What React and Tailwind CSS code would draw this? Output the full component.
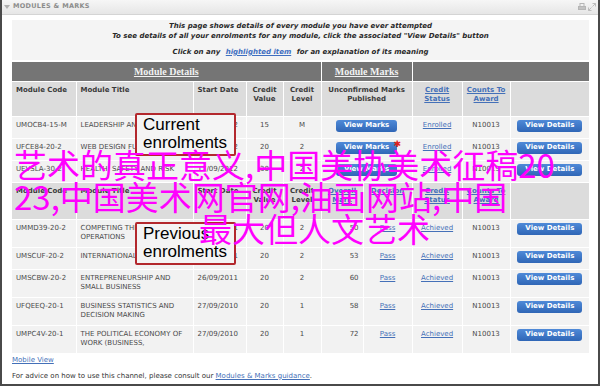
import React from "react";

// column widths of the marks table, left to right
const cols = [64, 117, 53, 37, 38, 42, 49, 50, 48, 79];

const currentRows = [
  { code: "UMOCB4-15-M", title: "LEADERSHIP AND CHANGE", date: "17/09/2012", value: "15", level: "M" },
  { code: "UFCE84-20-2", title: "WEB DESIGN FUNDAMENTALS", date: "17/09/2012", value: "20", level: "2", star: true },
  { code: "UEVSLA-30-2", title: "HEALTH, SAFETY AND RISK", date: "17/09/2012", value: "30", level: "2" },
];

const previousRows = [
  { code: "UMMD39-20-2", title: "COMPETING THROUGH OPERATIONS", date: "26/09/2011", value: "20", level: "2", mark: "50" },
  { code: "UMSCUF-20-2", title: "INTERNATIONAL BUSINESS", date: "26/09/2011", value: "20", level: "2", mark: "53" },
  { code: "UMSCBW-20-2", title: "ENTREPRENEURSHIP AND SMALL BUSINESS", date: "26/09/2011", value: "20", level: "2", mark: "60" },
  { code: "UFQEEQ-20-1", title: "BUSINESS STATISTICS AND DECISION MAKING", date: "27/09/2010", value: "20", level: "1", mark: "58" },
  { code: "UMPC4V-20-1", title: "THE POLITICAL ECONOMY OF WORK (BUSINESS,", date: "27/09/2010", value: "20", level: "1", mark: "72" },
];

const cell = "border border-white px-[4px] align-top";
const body = `${cell} bg-[#f2f2f2] pt-[4px] pb-[5px] leading-[9px] text-[#4a4a4a]`;
const btnCell = `${cell} bg-[#f2f2f2] pt-[3px] pb-[6px] text-center`;
const head = `${cell} bg-[#dcdcdc] pt-[4px] pb-[4px] leading-[9px] font-bold text-[#3a3a3a]`;
const link = "text-[#4470b8] underline";

function Button({ children, width }) {
  return (
    <span
      className={`inline-flex h-[12px] ${width} items-center justify-center rounded-[3px] bg-linear-to-b from-[#4f8ad8] to-[#2f66b6] text-[7px] font-bold leading-none text-white`}
    >
      {children}
    </span>
  );
}

function Callout({ top, children }) {
  return (
    <div
      className="absolute left-[133px] w-[101px] h-[43px] rounded-[2px] border-2 border-[#b3282d] bg-[#f4f4f4] pl-[6px] pt-[1px] font-['Liberation_Sans',Arial,sans-serif] text-[17px] leading-[18px] text-black"
      style={{ top }}
    >
      {children}
    </div>
  );
}

export default function App() {
  return (
    <div className="relative w-[600px] h-[386px] overflow-hidden border-x-2 border-b-2 border-[#4a4a4a] bg-white font-['DejaVu_Sans',Verdana,sans-serif] text-[7px]">
      {/* title bar */}
      <div className="flex h-[15px] items-center border-b border-[#d4d4d4] bg-linear-to-b from-[#f6f6f6] to-[#e6e6e6] pl-[2px] pr-[2px]">
        <svg width="6" height="5" viewBox="0 0 6 5" className="mr-[3px]">
          <path d="M0 0h6L3 4z" fill="#b0b0b0" />
        </svg>
        <span className="text-[6.5px] font-bold tracking-[0.3px] text-[#8c8c8c]">MODULES &amp; MARKS</span>
        <div className="ml-auto flex items-center gap-[2px]">
          <svg width="8" height="8" viewBox="0 0 8 8">
            <rect x="2" y="0.5" width="4" height="3" fill="none" stroke="#b5b5b5" />
            <rect x="0.5" y="3.5" width="7" height="3" fill="#c2c2c2" stroke="#b5b5b5" />
          </svg>
          <svg width="8" height="8" viewBox="0 0 8 8">
            <path d="M4.5 0.5h3v3M7.5 0.5L4.5 3.5M3.5 7.5h-3v-3M0.5 7.5l3-3" fill="none" stroke="#bdbdbd" />
          </svg>
        </div>
      </div>

      <div className="pl-[10px] pr-[9px] pt-[5px]">
        {/* intro */}
        <div className="h-[40px] bg-[#f4f4f4] pt-[2px] text-center text-[7px] font-bold italic leading-[9.5px] text-[#2a2a2a]">
          <div>This page shows details of every module you have ever attempted</div>
          <div>To see details of all your enrolments for any module, click the associated "View Details" button</div>
          <div className="mt-[6.5px]">
            Click on any <span className="text-[#3f6fc0] underline ml-[3px] mr-[3px]">highlighted item</span> for an explanation of its meaning
          </div>
        </div>

        {/* marks table */}
        <table className="mt-[2px] w-[577px] table-fixed border-collapse">
          <colgroup>
            {cols.map((w, i) => (
              <col key={i} style={{ width: w }} />
            ))}
          </colgroup>
          <tbody>
            <tr className="h-[19px]">
              <td colSpan={5} className="border border-white border-t-0 border-l-0 bg-[#757575] text-center font-['Liberation_Serif','Times_New_Roman',serif] text-[10px] font-bold text-[#f2f2f2] underline">
                Module Details
              </td>
              <td colSpan={2} className="border border-white border-t-0 bg-[#757575] text-center font-['Liberation_Serif','Times_New_Roman',serif] text-[10px] font-bold text-[#f2f2f2] underline">
                Module Marks
              </td>
              <td colSpan={3} className="border border-white border-t-0 border-r-0 bg-[#757575]"></td>
            </tr>
            <tr className="h-[35px]">
              <td className={`${head} border-l-0`}>Module Code</td>
              <td className={head}>Module Title</td>
              <td className={head}>Start Date</td>
              <td className={`${head} text-center`}>Credit Value</td>
              <td className={`${head} text-center`}>Credit Level</td>
              <td colSpan={2} className={`${head} text-center`}>Unconfirmed Marks Published</td>
              <td className={`${head} text-center`}><span className={link}>Credit Status</span></td>
              <td className={`${head} text-center`}><span className={link}>Counts To Award</span></td>
              <td className={`${head} border-r-0`}></td>
            </tr>
            {currentRows.map((r) => (
              <tr key={r.code}>
                <td className={`${body} border-l-0 whitespace-nowrap`}>{r.code}</td>
                <td className={`${body} whitespace-nowrap overflow-hidden`}>{r.title}</td>
                <td className={body}>{r.date}</td>
                <td className={`${body} text-center`}>{r.value}</td>
                <td className={`${body} text-center`}>{r.level}</td>
                <td colSpan={2} className={btnCell}>
                  <span className="relative inline-block">
                    <Button width="w-[61px]">View Marks</Button>
                    {r.star && (
                      <span className="absolute right-[-4px] top-[-2px] text-[9px] leading-none text-[#e0201c]">✱</span>
                    )}
                  </span>
                </td>
                <td className={`${body} text-center`}><span className={link}>Enrolled</span></td>
                <td className={`${body} text-center`}>N10013</td>
                <td className={`${btnCell} border-r-0`}>
                  <Button width="w-[65px]">View Details</Button>
                </td>
              </tr>
            ))}
            <tr className="h-[37px]">
              <td className={`${head} border-l-0`}>Module Code</td>
              <td className={head}>Module Title</td>
              <td className={head}>Start Date</td>
              <td className={`${head} text-center`}>Credit Value</td>
              <td className={`${head} text-center`}>Credit Level</td>
              <td className={`${head} text-center`}><span className={link}>Overall Mark</span></td>
              <td className={`${head} text-center`}><span className={link}>Decision</span></td>
              <td className={`${head} text-center`}><span className={link}>Credit Status</span></td>
              <td className={`${head} text-center`}><span className={link}>Counts To Award</span></td>
              <td className={`${head} border-r-0`}></td>
            </tr>
            {previousRows.map((r) => (
              <tr key={r.code}>
                <td className={`${body} border-l-0 whitespace-nowrap`}>{r.code}</td>
                <td className={body}>{r.title}</td>
                <td className={body}>{r.date}</td>
                <td className={`${body} text-center`}>{r.value}</td>
                <td className={`${body} text-center`}>{r.level}</td>
                <td className={`${body} text-right`}>{r.mark}</td>
                <td className={`${body} text-center`}><span className={link}>Pass</span></td>
                <td className={`${body} text-center`}><span className={link}>Achieved</span></td>
                <td className={`${body} text-center`}>N10013</td>
                <td className={`${btnCell} border-r-0`}>
                  <Button width="w-[65px]">View Details</Button>
                </td>
              </tr>
            ))}
          </tbody>
        </table>

        <div className="mt-[2px] leading-[9px]">
          <span className={link}>Mobile View</span>
        </div>
        <div className="mt-[7px] leading-[9px] text-[#333]">
          For advice on how to use this channel, please consult our{" "}
          <span className={link}>Modules &amp; Marks guidance</span>.
        </div>
      </div>

      {/* overlays */}
      <Callout top={113}>
        <div>Current</div>
        <div>enrolments</div>
      </Callout>
      <Callout top={222}>
        <div>Previous</div>
        <div>enrolments</div>
      </Callout>

      <div className="pointer-events-none absolute left-[12px] top-[148px] font-['Noto_Sans_CJK_SC','Noto_Sans',sans-serif] text-[33px] leading-[32px] text-[#ff00ff] whitespace-nowrap">
        <div>艺术的真正意义,中国美协美术征稿20</div>
        <div>23,中国美术网官网,油画网站,中国</div>
        <div className="pl-[185px]">最大但人文艺术</div>
      </div>
    </div>
  );
}
